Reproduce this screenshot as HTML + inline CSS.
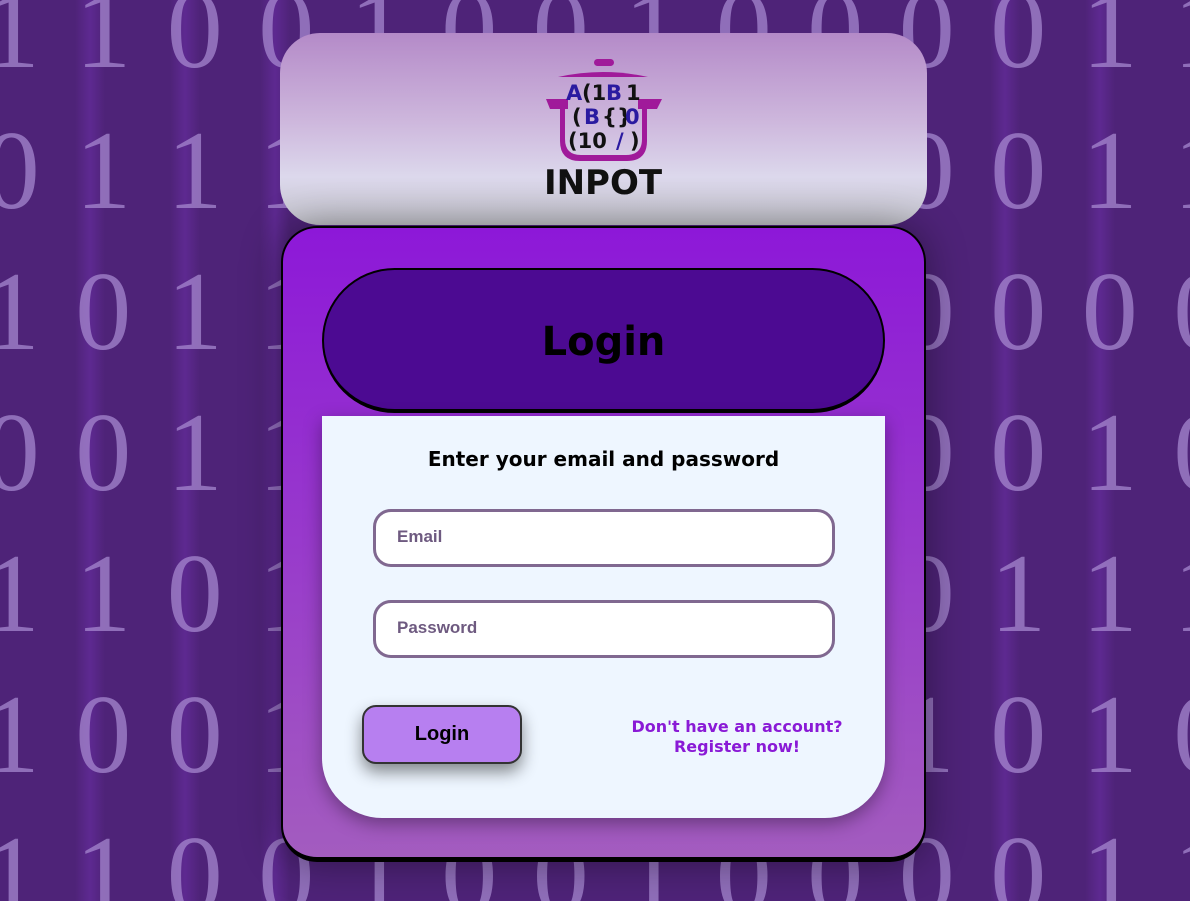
<!DOCTYPE html>
<html><head><meta charset="utf-8"><style>
*{margin:0;padding:0;box-sizing:border-box}
html,body{width:1190px;height:901px;overflow:hidden}
body{background:#4e2378;position:relative;font-family:"DejaVu Sans",sans-serif}
.bgw{position:absolute;left:0;top:0;width:1190px;height:901px;overflow:hidden}
.bg{position:absolute;left:-34px;top:-40px;font-family:"Liberation Serif",serif;font-size:112px;color:#a98bd2;opacity:.72}
.bg div{height:141px;line-height:141px;white-space:nowrap}
.bg span{display:inline-block;width:91.5px;text-align:center}
.col{position:absolute;top:0;height:901px;width:30px;background:linear-gradient(90deg,transparent,rgba(140,60,220,.25),transparent)}
.head{position:absolute;left:280px;top:33px;width:647px;height:192px;border-radius:40px;background:linear-gradient(#b48ac8 0%,#cdb6dc 45%,#dcd8ec 75%,#c4c4cc 100%)}
.card{position:absolute;left:281px;top:226px;width:645px;height:636px;border:2px solid #000;border-bottom-width:5px;border-radius:36px;background:linear-gradient(#8d18d8,#a35cbf);box-shadow:0 0 40px rgba(0,0,0,.4)}
.pill{position:absolute;left:322px;top:268px;width:563px;height:145px;border:2px solid #000;border-bottom-width:4px;border-radius:75px;background:#4c0a92;text-align:center;line-height:144px;font-size:40px;font-weight:bold;color:#000}
.panel{position:absolute;left:322px;top:416px;width:563px;height:402px;background:#eef6ff;border-radius:0 0 60px 60px;box-shadow:0 6px 18px rgba(0,0,0,.35)}
.h{position:absolute;top:31px;width:100%;text-align:center;font-size:20px;font-weight:bold}
.in{position:absolute;left:51px;width:462px;height:58px;border:3px solid #806890;border-radius:18px;background:#fff;font-family:"Liberation Sans",sans-serif;font-weight:bold;font-size:17px;color:#6e5a80;padding-left:21px;line-height:50px}
.btn{position:absolute;left:40px;top:289px;width:160px;height:59px;background:#b77ff0;border:2px solid #333;border-radius:14px;text-align:center;line-height:55px;font-family:"Liberation Sans",sans-serif;font-weight:bold;font-size:20px;box-shadow:0 8px 16px rgba(0,0,0,.45)}
.lnk{position:absolute;left:290px;top:301px;width:250px;text-align:center;font-size:16px;font-weight:bold;color:#8a1ad6;line-height:20px}
</style></head><body>
<div class="bgw">
<div class="col" style="left:75px"></div><div class="col" style="left:170px"></div><div class="col" style="left:260px"></div><div class="col" style="left:990px"></div><div class="col" style="left:1085px"></div>
<div class="bg">
<div><span>1</span><span>1</span><span>0</span><span>0</span><span>1</span><span>0</span><span>0</span><span>1</span><span>0</span><span>0</span><span>0</span><span>0</span><span>1</span><span>1</span></div>
<div><span>0</span><span>1</span><span>1</span><span>1</span><span>0</span><span>1</span><span>1</span><span>1</span><span>0</span><span>0</span><span>0</span><span>0</span><span>1</span><span>1</span></div>
<div><span>1</span><span>0</span><span>1</span><span>1</span><span>0</span><span>1</span><span>1</span><span>1</span><span>0</span><span>0</span><span>0</span><span>0</span><span>0</span><span>0</span></div>
<div><span>0</span><span>0</span><span>1</span><span>1</span><span>0</span><span>1</span><span>1</span><span>1</span><span>0</span><span>0</span><span>0</span><span>0</span><span>1</span><span>0</span></div>
<div><span>1</span><span>1</span><span>0</span><span>1</span><span>1</span><span>0</span><span>1</span><span>1</span><span>0</span><span>1</span><span>0</span><span>1</span><span>1</span><span>1</span></div>
<div><span>1</span><span>0</span><span>0</span><span>1</span><span>1</span><span>0</span><span>0</span><span>1</span><span>0</span><span>0</span><span>1</span><span>0</span><span>1</span><span>0</span></div>
<div><span>1</span><span>1</span><span>0</span><span>0</span><span>1</span><span>0</span><span>0</span><span>1</span><span>0</span><span>0</span><span>0</span><span>0</span><span>1</span><span>1</span></div>
</div>
</div>
<div class="head">
<svg width="647" height="192" viewBox="0 0 647 192">
<g fill="#a01a9a"><rect x="314" y="26" width="20" height="7" rx="3.5"/><path d="M278 44 Q323 34 368 44 Z"/>
<path d="M266 66 h22 v10 h-18 z M358 66 h24 l-5 10 h-19z"/>
<path d="M280 66 h5 v40 q0 16 16 16 h45 q16 0 16 -16 v-40 h5 v42 q0 20 -20 20 h-47 q-20 0 -20 -20z"/></g>
<g font-family="DejaVu Sans" font-weight="bold" font-size="21"><text x="286" y="67" fill="#2a1aa0">A</text><text x="302" y="67" fill="#111">(1</text><text x="326" y="67" fill="#2a1aa0">B</text><text x="346" y="67" fill="#111">1</text>
<text x="292" y="91" fill="#111">(</text><text x="304" y="91" fill="#2a1aa0">B</text><text x="322" y="91" fill="#111">{}</text><text x="345" y="91" fill="#2a1aa0">0</text>
<text x="288" y="115" fill="#111">(10</text><text x="336" y="115" fill="#2a1aa0">/</text><text x="350" y="115" fill="#111">)</text></g>
<text x="323" y="161" text-anchor="middle" font-family="DejaVu Sans" font-weight="bold" font-size="34" fill="#111">INPOT</text>
</svg></div>
<div class="card"></div>
<div class="pill">Login</div>
<div class="panel">
<div class="h">Enter your email and password</div>
<div class="in" style="top:93px">Email</div>
<div class="in" style="top:184px">Password</div>
<div class="btn">Login</div>
<div class="lnk">Don't have an account?<br>Register now!</div>
</div>
</body></html>
